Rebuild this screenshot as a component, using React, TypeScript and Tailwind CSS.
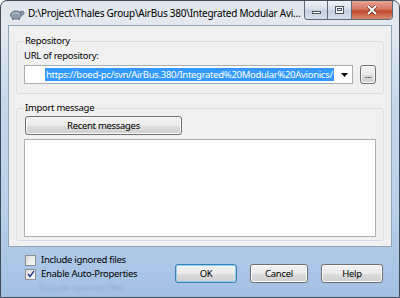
import React from 'react';

function Turtle() {
  return (
    <svg width="16" height="14" viewBox="0 0 16 14">
      <ellipse cx="7" cy="8" rx="5.5" ry="4" fill="#8d9bab" stroke="#4f5d6d" strokeWidth="0.8" />
      <path d="M3 7.5 Q7 4 11 7.5" fill="none" stroke="#c6d0da" strokeWidth="1" />
      <circle cx="13" cy="6" r="2" fill="#8fa0b1" stroke="#4f5d6d" strokeWidth="0.7" />
      <rect x="3" y="11" width="2" height="2" fill="#6d7b8a" />
      <rect x="9" y="11" width="2" height="2" fill="#6d7b8a" />
    </svg>
  );
}

function WinButton({ label, primary, className }: { label: string; primary?: boolean; className?: string }) {
  return (
    <div
      className={`flex h-[19px] items-center justify-center rounded-[3px] border ${
        primary ? 'border-[#3c7fb1] shadow-[inset_0_0_0_1px_#8ed2f2]' : 'border-[#707070] shadow-[inset_0_0_0_1px_#fbfbfb]'
      } bg-[linear-gradient(to_bottom,#f2f2f2_0%,#ebebeb_50%,#dddddd_51%,#cfcfcf_100%)] text-black ${className ?? ''}`}
    >
      {label}
    </div>
  );
}

function Check({ checked, label }: { checked?: boolean; label: string }) {
  return (
    <div className="flex h-[14px] items-center gap-[5px]">
      <div className="flex h-[11px] w-[11px] items-center justify-center border border-[#8f8f8f] bg-[linear-gradient(135deg,#dcdcdc,#fbfbfb)]">
        {checked && (
          <svg width="8" height="8" viewBox="0 0 8 8">
            <path d="M1 4 L3 6.5 L7 1" fill="none" stroke="#2a3f8c" strokeWidth="1.4" />
          </svg>
        )}
      </div>
      <span className="text-black">{label}</span>
    </div>
  );
}

export default function App() {
  return (
    <div className="flex h-[298px] w-[400px] flex-col overflow-hidden rounded-t-[7px] border border-[#3e4b5b] bg-[linear-gradient(to_bottom,#dfe5ec_0%,#e4e9ef_8%,#c6d7eb_35%,#bad0ea_70%,#a3c0e4_100%)] font-['Noto_Sans',sans-serif] text-[9.5px] leading-[14px] tracking-[-0.3px] text-black">
      {/* title bar */}
      <div className="flex h-[24px] shrink-0 items-start">
        <div className="ml-[8px] mt-[6px]">
          <Turtle />
        </div>
        <div className="ml-[3px] mt-[5px] whitespace-nowrap text-[10px] tracking-[-0.25px]">
          D:\Project\Thales Group\AirBus 380\Integrated Modular Avi...
        </div>
        <div className="ml-auto mr-[6px] flex h-[19px] shrink-0 rounded-b-[4px] border border-t-0 border-[#5c6a7c]">
          <div className="flex w-[23px] items-center justify-center rounded-bl-[4px] border-r border-[#5c6a7c] bg-[linear-gradient(to_bottom,#eef2f6,#d4dde7_50%,#c2cedb_51%,#d6e0ea)]">
            <div className="mt-[4px] h-[3px] w-[9px] border border-[#4a5563] bg-white" />
          </div>
          <div className="flex w-[24px] items-center justify-center border-r border-[#5c6a7c] bg-[linear-gradient(to_bottom,#eef2f6,#d4dde7_50%,#c2cedb_51%,#d6e0ea)]">
            <div className="h-[8px] w-[9px] border border-[#4a5563] bg-white">
              <div className="m-[1px] h-[3px] border border-[#4a5563]" />
            </div>
          </div>
          <div className="flex w-[40px] items-center justify-center rounded-br-[4px] bg-[linear-gradient(to_bottom,#e8a493,#d37a62_45%,#c24a2e_55%,#d8876a)]">
            <svg width="12" height="10" viewBox="0 0 12 10">
              <path d="M2 1 L10 9 M10 1 L2 9" stroke="#5a2a20" strokeWidth="3.2" />
              <path d="M2 1 L10 9 M10 1 L2 9" stroke="#ffffff" strokeWidth="1.8" />
            </svg>
          </div>
        </div>
      </div>

      {/* body with frame sides */}
      <div className="flex flex-1 flex-col px-[7px]">
        <div className="border border-[#8fa4bd] bg-[#f0f0f0] px-[7px] pb-[5px] pt-[8px]">
          <fieldset className="rounded-[3px] border border-[#d5dfe5] pb-[9px] pl-[7px] pr-[7px]">
            <legend className="px-[1px]">Repository</legend>
            <div className="mt-[1px]">URL of repository:</div>
            <div className="mt-[2px] flex items-center gap-[7px]">
              <div className="flex h-[19px] w-[329px] shrink-0 items-center overflow-hidden border border-[#abadb3] bg-white">
                <div className="ml-[20px] flex h-[13px] shrink-0 items-center whitespace-nowrap bg-[#3399ff] pl-[1px] pr-[1px] text-white">
                  https://boed-pc/svn/AirBus.380/Integrated%20Modular%20Avionics/
                </div>
                <svg className="ml-auto mr-[4px] shrink-0" width="7" height="4" viewBox="0 0 7 4">
                  <path d="M0 0 H7 L3.5 4 Z" fill="#000" />
                </svg>
              </div>
              <WinButton label="..." className="h-[18px] w-[16px] text-[9px]" />
            </div>
          </fieldset>

          <fieldset className="mt-[7px] rounded-[3px] border border-[#d5dfe5] pb-[3px] pl-[7px] pr-[7px]">
            <legend className="px-[1px]">Import message</legend>
            <WinButton label="Recent messages" className="ml-[1px] mt-[1px] h-[17px] w-[157px]" />
            <div className="mt-[4px] h-[98px] border border-[#abadb3] bg-white" />
          </fieldset>
        </div>

        {/* glass area */}
        <div className="flex flex-1">
          <div className="flex flex-col pl-[17px] pt-[6px]">
            <Check label="Include ignored files" />
            <Check checked label="Enable Auto-Properties" />
            <div className="ml-[14px] mt-[0px] text-[#8aa3bf] opacity-70 blur-[1px]">Include ignored files</div>
          </div>
          <div className="ml-auto flex gap-[13px] pr-[9px] pt-[17px]">
            <WinButton primary label="OK" className="w-[62px]" />
            <WinButton label="Cancel" className="w-[58px]" />
            <WinButton label="Help" className="w-[62px]" />
          </div>
        </div>
      </div>
    </div>
  );
}
